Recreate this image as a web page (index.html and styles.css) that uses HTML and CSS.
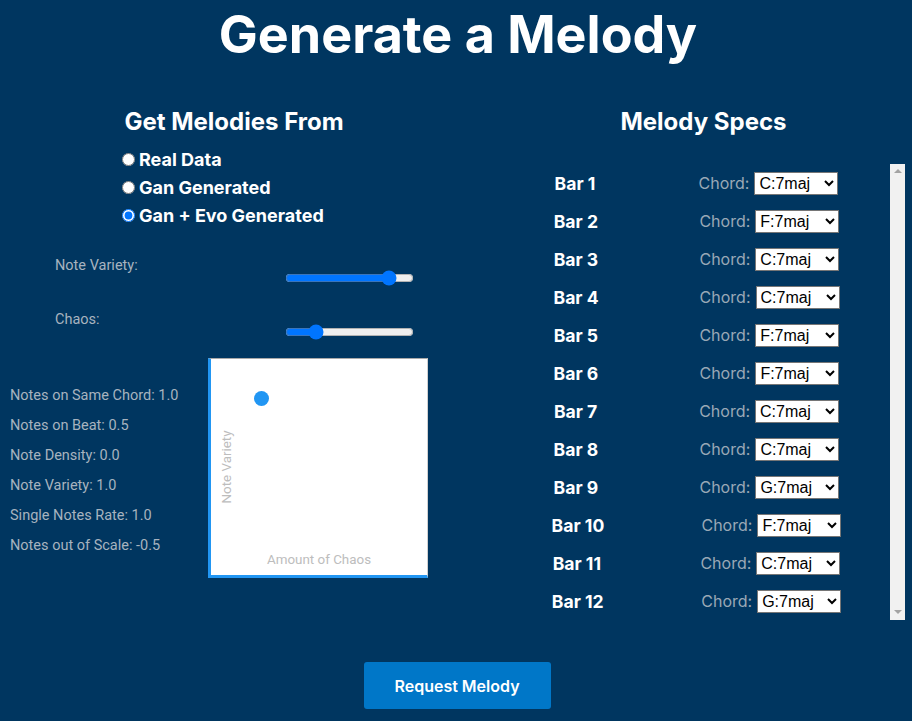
FILE: index.html
```html
<!DOCTYPE html>
<html>
<head>
<meta charset="utf-8">
<link rel="stylesheet" href="styles.css">
</head>
<body>
<h1 class="title">Generate a Melody</h1>
<div class="main">
  <section class="left">
    <h2 class="heading">Get Melodies From</h2>
    <div class="radios">
      <label class="radio"><input type="radio" name="src">Real Data</label>
      <label class="radio"><input type="radio" name="src">Gan Generated</label>
      <label class="radio"><input type="radio" name="src" checked>Gan + Evo Generated</label>
    </div>
    <div class="sliders">
      <div class="slider-row"><span class="slider-label">Note Variety:</span><input class="range" type="range" min="0" max="100" value="85"></div>
      <div class="slider-row"><span class="slider-label">Chaos:</span><input class="range" type="range" min="0" max="100" value="20"></div>
    </div>
    <div class="stats-chart">
      <ul class="stats">
        <li>Notes on Same Chord: 1.0</li>
        <li>Notes on Beat: 0.5</li>
        <li>Note Density: 0.0</li>
        <li>Note Variety: 1.0</li>
        <li>Single Notes Rate: 1.0</li>
        <li>Notes out of Scale: -0.5</li>
      </ul>
      <div class="chart">
        <span class="dot"></span>
        <span class="axis-y">Note Variety</span>
        <span class="axis-x">Amount of Chaos</span>
      </div>
    </div>
  </section>
  <section class="right">
    <h2 class="heading">Melody Specs</h2>
    <div class="bars">
      <div class="bar-list">
        <div class="bar-row"><span class="bar-label">Bar 1</span><span class="chord"><span class="chord-label">Chord:</span><select class="chord-select"><option>C:7maj</option></select></span></div>
        <div class="bar-row"><span class="bar-label">Bar 2</span><span class="chord"><span class="chord-label">Chord:</span><select class="chord-select"><option>F:7maj</option></select></span></div>
        <div class="bar-row"><span class="bar-label">Bar 3</span><span class="chord"><span class="chord-label">Chord:</span><select class="chord-select"><option>C:7maj</option></select></span></div>
        <div class="bar-row"><span class="bar-label">Bar 4</span><span class="chord"><span class="chord-label">Chord:</span><select class="chord-select"><option>C:7maj</option></select></span></div>
        <div class="bar-row"><span class="bar-label">Bar 5</span><span class="chord"><span class="chord-label">Chord:</span><select class="chord-select"><option>F:7maj</option></select></span></div>
        <div class="bar-row"><span class="bar-label">Bar 6</span><span class="chord"><span class="chord-label">Chord:</span><select class="chord-select"><option>F:7maj</option></select></span></div>
        <div class="bar-row"><span class="bar-label">Bar 7</span><span class="chord"><span class="chord-label">Chord:</span><select class="chord-select"><option>C:7maj</option></select></span></div>
        <div class="bar-row"><span class="bar-label">Bar 8</span><span class="chord"><span class="chord-label">Chord:</span><select class="chord-select"><option>C:7maj</option></select></span></div>
        <div class="bar-row"><span class="bar-label">Bar 9</span><span class="chord"><span class="chord-label">Chord:</span><select class="chord-select"><option>G:7maj</option></select></span></div>
        <div class="bar-row"><span class="bar-label">Bar 10</span><span class="chord"><span class="chord-label">Chord:</span><select class="chord-select"><option>F:7maj</option></select></span></div>
        <div class="bar-row"><span class="bar-label">Bar 11</span><span class="chord"><span class="chord-label">Chord:</span><select class="chord-select"><option>C:7maj</option></select></span></div>
        <div class="bar-row"><span class="bar-label">Bar 12</span><span class="chord"><span class="chord-label">Chord:</span><select class="chord-select"><option>G:7maj</option></select></span></div>
      </div>
      <div class="scrollbar"><span class="arrow-up"></span><span class="arrow-down"></span></div>
    </div>
  </section>
</div>
<div class="actions">
  <button class="request">Request Melody</button>
</div>
</body>
</html>
```

FILE: styles.css
```css
html, body {
  margin: 0;
  padding: 0;
  background: #003660;
  height: 100%;
  overflow: hidden;
}
body {
  font-family: Inter, "Noto Sans", sans-serif;
  color: #fff;
}
.title {
  margin: 0;
  padding-left: 4px;
  height: 70px;
  font-size: 52px;
  line-height: 70px;
  font-weight: 700;
  text-align: center;
}
.main {
  display: flex;
  margin-top: 38px;
}
.left {
  width: 468px;
  flex: none;
}
.right {
  width: 405px;
  flex: none;
  margin-left: 32px;
}
.heading {
  margin: 0;
  font-size: 24px;
  line-height: 28px;
  font-weight: 700;
  text-align: center;
}
.right .heading {
  padding-left: 2px;
}
.radios {
  margin-top: 9px;
  padding-left: 122px;
  display: flex;
  flex-direction: column;
}
.radio {
  display: flex;
  align-items: center;
  height: 28px;
  font-size: 18px;
  font-weight: 700;
}
.radio input {
  margin: 0 4px 0 0;
  width: 13px;
  height: 13px;
}
.sliders {
  margin-top: 27px;
}
.slider-row {
  display: flex;
  align-items: flex-start;
  height: 54px;
}
.slider-row + .slider-row {
  height: 48px;
}
.slider-label {
  width: 285px;
  flex: none;
  padding-left: 55px;
  box-sizing: border-box;
  font-family: Roboto, sans-serif;
  font-size: 14.5px;
  line-height: 20px;
  color: #a7b3bf;
}
.range {
  margin: 14px 0 0 0;
  width: 129px;
  height: 16px;
}
.stats-chart {
  display: flex;
}
.stats {
  list-style: none;
  margin: 0;
  padding: 23px 0 0 10px;
  width: 208px;
  flex: none;
  box-sizing: border-box;
  font-family: Roboto, sans-serif;
  font-size: 14.5px;
  line-height: 30px;
  color: #a7b3bf;
}
.chart {
  position: relative;
  width: 220px;
  height: 220px;
  flex: none;
  box-sizing: border-box;
  background: #fff;
  border-left: 3px solid #2196f3;
  border-bottom: 3px solid #2196f3;
  border-top: 1px solid #a9a9a9;
  border-right: 1px solid #d0d0d0;
}
.dot {
  position: absolute;
  left: 43px;
  top: 32px;
  width: 15px;
  height: 15px;
  border-radius: 50%;
  background: #2196f3;
}
.axis-x {
  position: absolute;
  left: 0;
  right: 0;
  bottom: 7px;
  text-align: center;
  font-family: Roboto, sans-serif;
  font-size: 13.4px;
  line-height: 16px;
  color: #bdbdbd;
}
.axis-y {
  position: absolute;
  left: 16px;
  top: 108px;
  transform: translate(-50%, -50%) rotate(-90deg);
  white-space: nowrap;
  font-family: Roboto, sans-serif;
  font-size: 13.4px;
  line-height: 16px;
  color: #bdbdbd;
}
.bars {
  margin-top: 28px;
  height: 456px;
  display: flex;
}
.bar-list {
  flex: 1;
}
.scrollbar {
  width: 15px;
  flex: none;
  background: #f1f1f1;
  display: flex;
  flex-direction: column;
  justify-content: space-between;
  align-items: center;
  padding: 5px 0 6px;
  box-sizing: border-box;
}
.arrow-up {
  width: 0;
  height: 0;
  border-left: 4px solid transparent;
  border-right: 4px solid transparent;
  border-bottom: 4px solid #a3a3a3;
}
.arrow-down {
  width: 0;
  height: 0;
  border-left: 4px solid transparent;
  border-right: 4px solid transparent;
  border-top: 4px solid #a3a3a3;
}
.bar-row {
  display: flex;
  justify-content: space-around;
  align-items: center;
  height: 38px;
}
.bar-label {
  font-size: 17.6px;
  font-weight: 700;
  margin-left: 3px;
}
.chord {
  display: flex;
  align-items: center;
  gap: 5px;
}
.chord-label {
  font-size: 16px;
  color: #9aa8b6;
}
.chord-select {
  font-family: "Liberation Sans", Arial, sans-serif;
  font-size: 16px;
  width: 84px;
  height: 23px;
  margin: 0;
  background: #fff;
  color: #000;
  border: 1px solid #767676;
  border-radius: 0;
}
.actions {
  display: flex;
  justify-content: center;
  margin-top: 42px;
}
.request {
  width: 187px;
  height: 47px;
  border: none;
  border-radius: 3px;
  background: #0077c8;
  color: #fff;
  font-family: Inter, sans-serif;
  font-size: 16px;
  font-weight: 600;
  margin-left: 2px;
}
```
